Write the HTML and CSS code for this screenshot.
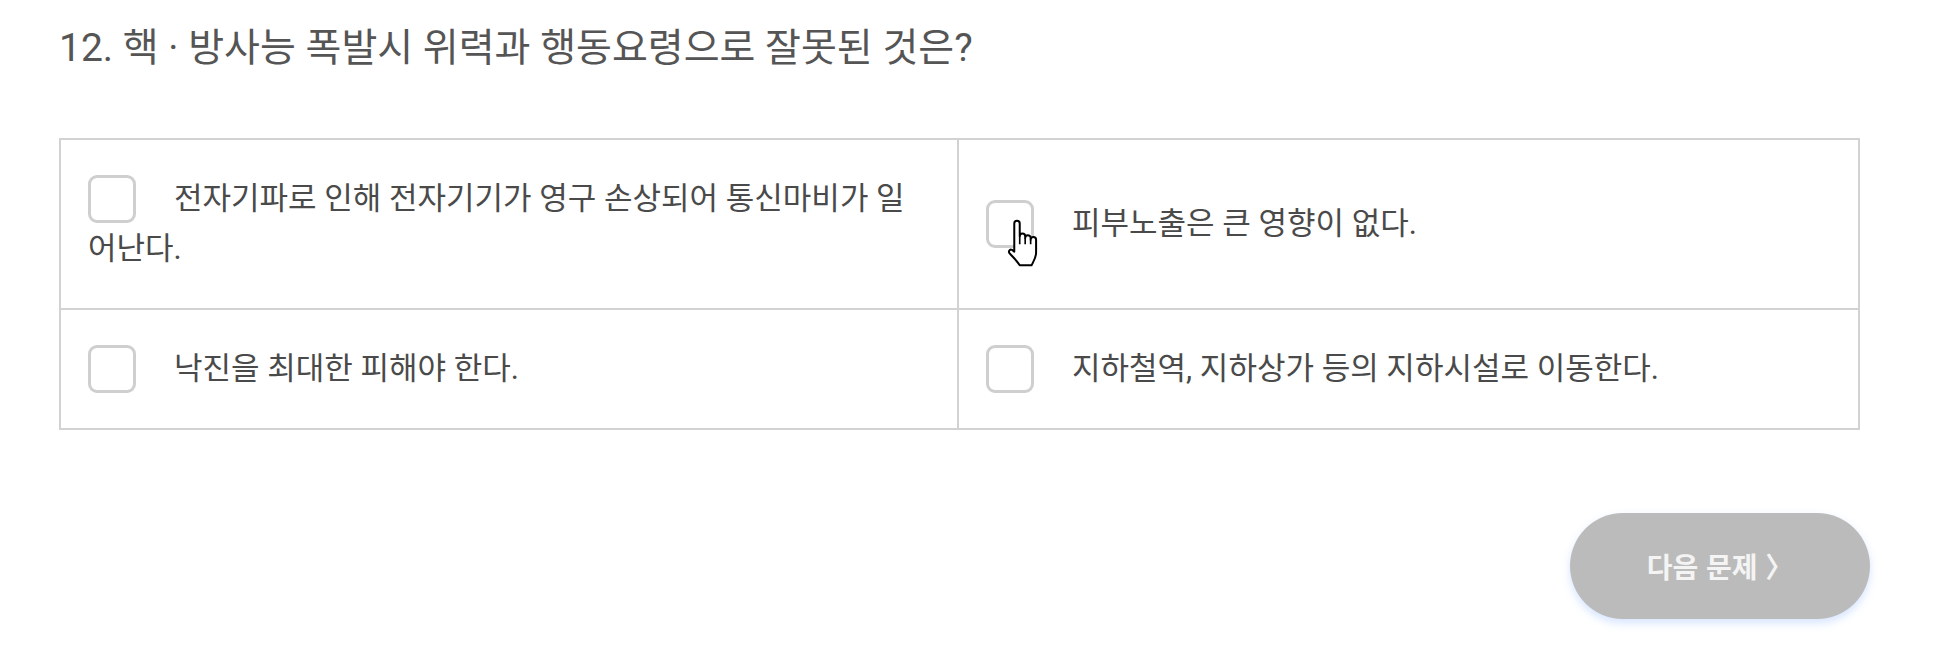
FILE: index.html
```html
<!DOCTYPE html>
<html lang="ko">
<head>
<meta charset="utf-8">
<link rel="stylesheet" href="styles.css">
</head>
<body>
<div class="quiz">
  <h2 class="question">12. 핵 · 방사능 폭발시 위력과 행동요령으로 잘못된 것은?</h2>
  <div class="options">
    <div class="cell"><label class="opt"><span class="box"></span>전자기파로 인해 전자기기가 영구 손상되어 통신마비가 일어난다.</label></div>
    <div class="cell"><label class="opt"><span class="box"></span>피부노출은 큰 영향이 없다.</label></div>
    <div class="cell"><label class="opt"><span class="box"></span>낙진을 최대한 피해야 한다.</label></div>
    <div class="cell"><label class="opt"><span class="box"></span>지하철역, 지하상가 등의 지하시설로 이동한다.</label></div>
  </div>
  <div class="footer">
    <button class="next">다음 문제 〉</button>
  </div>
</div>
<svg class="cursor" width="34" height="50" viewBox="0 0 18.5 27.5">
  <path d="M5 3 a1.5 1.5 0 0 1 3 0 V10 a1.5 1.5 0 0 1 3 0 V11 a1.5 1.5 0 0 1 3 0 V12 a1.5 1.5 0 0 1 3 0 V19 c0 3 -1.5 5 -2.5 7 H8 c-1 -1.5 -3 -4 -5.5 -6.5 c-1 -1 0 -2.5 1.2 -2 L5 18.5 Z" fill="#fff" stroke="#000" stroke-width="1.1" stroke-linejoin="round"/>
  <path d="M8 10 V14.5 M11 11 V14.5 M14 12 V14.5" fill="none" stroke="#000" stroke-width="0.9"/>
</svg>
</body>
</html>
```
FILE: styles.css
```css
html, body {
  margin: 0;
  padding: 0;
  background: #fff;
}
body {
  font-family: Roboto, "Noto Sans CJK KR", sans-serif;
  width: 1952px;
  height: 646px;
  overflow: hidden;
  position: relative;
}
.quiz {
  padding: 27px 92px 0 59px;
}
.question {
  margin: 0;
  font-size: 39px;
  font-weight: 400;
  line-height: 43px;
  color: #555;
}
.options {
  margin-top: 68px;
  display: grid;
  grid-template-columns: 898px 1fr;
  border-top: 2px solid #d2d2d2;
  border-left: 2px solid #d2d2d2;
}
.cell {
  display: flex;
  align-items: center;
  padding: 34px 34px 34px 27px;
  border-right: 2px solid #d2d2d2;
  border-bottom: 2px solid #d2d2d2;
}
.opt {
  display: block;
  font-size: 31px;
  line-height: 50px;
  color: #4a4a4a;
}
.box {
  display: inline-block;
  width: 42px;
  height: 42px;
  border: 3px solid #cfcfcf;
  border-radius: 9px;
  vertical-align: middle;
  margin: -6px 38px -6px 0;
  position: relative;
  top: -2px;
}
.footer {
  display: flex;
  justify-content: flex-end;
  margin-top: 83px;
  margin-right: -10px;
}
.next {
  width: 300px;
  height: 106px;
  border: none;
  border-radius: 53px;
  background: #bbbbbb;
  color: #f4f4f4;
  font-family: "Noto Sans CJK KR", sans-serif;
  font-size: 28px;
  font-weight: 700;
  box-shadow: 0 4px 8px rgba(90, 150, 255, 0.25);
  padding: 0;
}
.cursor {
  position: absolute;
  left: 1005px;
  top: 218px;
}
```
